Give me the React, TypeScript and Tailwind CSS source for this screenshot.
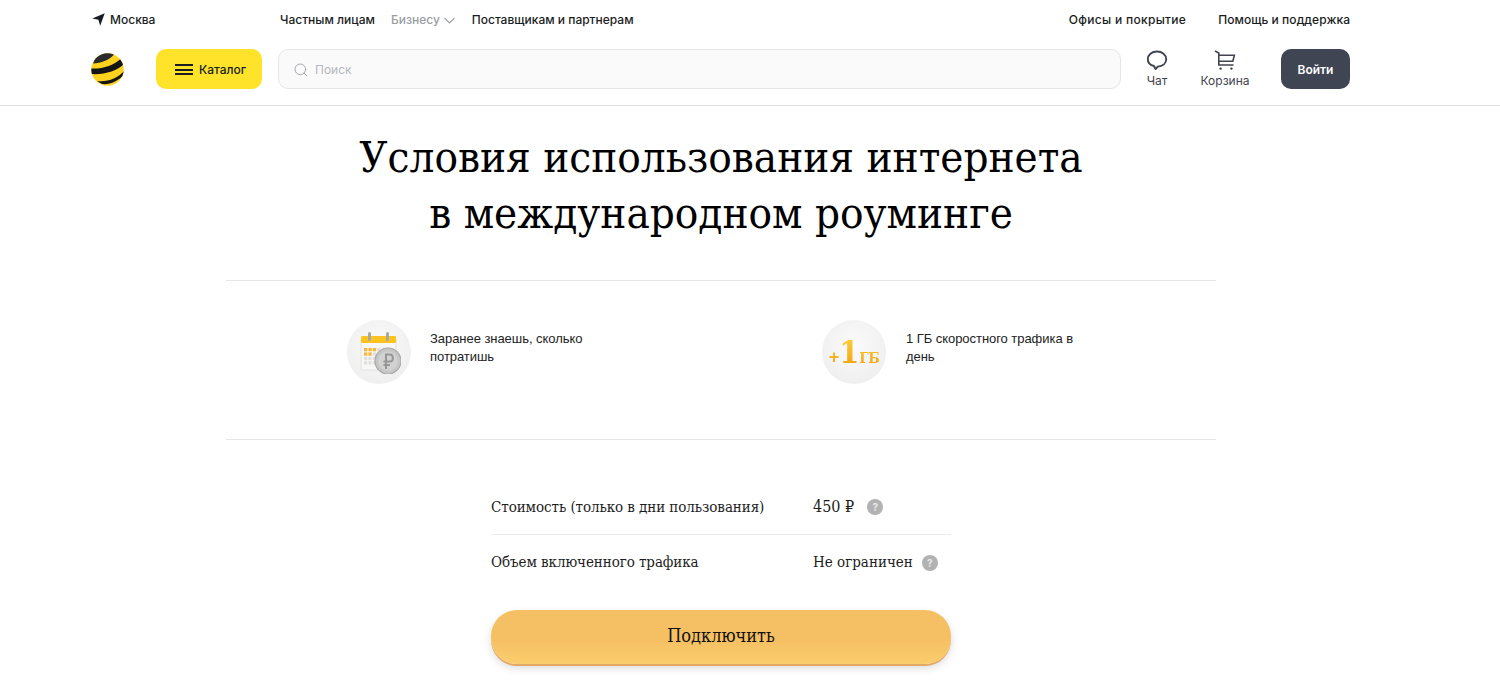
import { Search } from "lucide-react";

const sans = "font-['Inter','Noto_Sans',sans-serif]";
const slab = "font-['DejaVu_Serif_Condensed','DejaVu_Serif',serif]";

function Logo() {
  return (
    <svg width="33" height="33" viewBox="0 0 33 33" className="shrink-0">
      <defs>
        <clipPath id="ball">
          <circle cx="16.5" cy="16.5" r="16.2" />
        </clipPath>
      </defs>
      <circle cx="16.5" cy="16.5" r="16.2" fill="#fdd21f" />
      <g clipPath="url(#ball)">
        <path d="M2 10.500 C10 10 18 7.500 23.500 1 L16 -1 L5 3 Z" fill="#2b2b2b" />
        <path d="M0 21 C13 22 26 18 33 11 L30 5.500 C23 12.500 12 16 0 15.500Z" fill="#151515" />
        <path d="M6 28 C16 29.500 27 25 33 18 L33 21.500 C28 28 18 32 11 31Z" fill="#151515" />
      </g>
    </svg>
  );
}

function PlaneIcon() {
  return (
    <svg width="13" height="13" viewBox="0 0 13 13" className="shrink-0">
      <path d="M0.3 5.4 L12.7 0.3 L8.2 12.7 L6.4 6.8 Z" fill="#191c22" />
    </svg>
  );
}

function ChatIcon() {
  return (
    <svg width="22" height="21" viewBox="0 0 22 21" fill="none" stroke="#3f4450" strokeWidth="1.9">
      <path d="M11 1.5 C5.8 1.5 1.8 4.8 1.8 9.2 C1.8 12.8 4.6 15.2 8 16 L9.6 19 L11.8 16.6 C16.8 16.2 20.2 13.2 20.2 9.2 C20.2 4.8 16.2 1.5 11 1.5Z" strokeLinejoin="round" />
    </svg>
  );
}

function CartIcon() {
  return (
    <svg width="22" height="21" viewBox="0 0 22 21" fill="none" stroke="#3f4450" strokeWidth="1.6">
      <path d="M1 1 L4.8 3 L4.8 15 L19.5 15" />
      <path d="M4.8 5.2 L20.4 5.2 L18.8 11.2 L4.8 11.2" />
      <circle cx="6.6" cy="18.6" r="1.2" fill="#3f4450" stroke="none" />
      <circle cx="17.4" cy="18.6" r="1.2" fill="#3f4450" stroke="none" />
    </svg>
  );
}

function CalendarCoin() {
  return (
    <svg width="44" height="44" viewBox="0 0 44 44">
      <rect x="4" y="9" width="35" height="31" rx="1" fill="#f7f7f5" stroke="#e2e2e2" />
      <rect x="4" y="6" width="35" height="7" rx="1" fill="#fdc420" />
      <rect x="11" y="2" width="3" height="9" rx="1.5" fill="#a8a8a0" />
      <rect x="29" y="2" width="3" height="9" rx="1.5" fill="#a8a8a0" />
      {[0, 1, 2, 3].map((col) =>
        [0, 1, 2, 3].map((row) => (
          <rect
            key={`${col}-${row}`}
            x={7 + col * 4.4}
            y={18 + row * 4.4}
            width="3.3"
            height="3.3"
            fill={row === 0 && col < 3 ? "#f9b63a" : row === 1 && col < 2 ? "#f9b63a" : "#e0e0e0"}
          />
        ))
      )}
      <circle cx="31" cy="31" r="13" fill="#c6c6c6" stroke="#a8a8a8" strokeWidth="1.2" />
      <circle cx="31" cy="31" r="9.800" fill="#d2d2d2" />
      <path d="M29 39 L29 24.500 L33 24.500 C36.800 24.500 36.800 31.500 33 31.500 L26.500 31.500 M26.500 35 L33 35" fill="none" stroke="#969696" strokeWidth="2" />
    </svg>
  );
}

function HelpDot() {
  return (
    <span className={`${sans} flex h-4 w-4 items-center justify-center rounded-full bg-[#b2b2b2] text-[10px] font-bold leading-none text-[#e8e8e8]`}>
      ?
    </span>
  );
}

function TopBar() {
  return (
    <div className={`${sans} flex h-10 items-center text-[12px] font-medium text-[#191c22]`}>
      <div className="flex w-[188px] items-center gap-[5px] pb-px">
        <PlaneIcon />
        <span>Москва</span>
      </div>
      <div className="flex items-center">
        <span>Частным лицам</span>
        <span className="ml-4 flex items-center gap-1 text-[#9a9da3]">
          Бизнесу
          <svg width="11" height="7" viewBox="0 0 11 7" fill="none" stroke="#9a9da3" strokeWidth="1.2">
            <path d="M0.5 0.8 L5.5 5.8 L10.5 0.8" />
          </svg>
        </span>
        <span className="ml-[17px]">Поставщикам и партнерам</span>
      </div>
      <div className="ml-auto flex items-center gap-8">
        <span className="tracking-[0.3px]">Офисы и покрытие</span>
        <span className="tracking-[0.05px]">Помощь и поддержка</span>
      </div>
    </div>
  );
}

function MainBar() {
  return (
    <div className={`${sans} flex h-[65px] items-start`}>
      <div className="-ml-px mt-[13px] w-[65px]">
        <Logo />
      </div>
      <button className="mt-[9px] flex h-10 w-[106px] items-center gap-[6px] rounded-[10px] bg-[#ffe32b] pl-[19px] pt-px text-[12px] font-medium text-[#191c22]">
        <span className="flex w-[18px] flex-col gap-[2.5px]">
          <span className="h-[2px] bg-[#191c22]" />
          <span className="h-[2px] bg-[#191c22]" />
          <span className="h-[2px] bg-[#191c22]" />
        </span>
        Каталог
      </button>
      <div className="ml-4 mt-[9px] flex h-10 w-[843px] items-center gap-[6px] rounded-[10px] border border-[#e5e6e8] bg-[#fafafa] pl-[14px] pt-px text-[12px] text-[#b5b7bd]">
        <Search size={16} strokeWidth={1.5} className="text-[#a5a7ad]" />
        Поиск
      </div>
      <div className="ml-[24px] mt-[10px] flex w-[24px] flex-col items-center text-[12px] text-[#3f4450]">
        <ChatIcon />
        <span className="mt-[1px]">Чат</span>
      </div>
      <div className="ml-[31px] mt-[10px] flex w-[50px] flex-col items-center text-[12px] text-[#3f4450]">
        <CartIcon />
        <span className="mt-[1px]">Корзина</span>
      </div>
      <button className="ml-auto mt-[9px] h-10 w-[69px] rounded-[10px] bg-[#404553] pt-px text-[12px] font-semibold text-white">
        Войти
      </button>
    </div>
  );
}

function Feature({ icon, text, gap }: { icon: React.ReactNode; text: string; gap: string }) {
  return (
    <div className={`flex items-center ${gap}`}>
      <div className="flex h-[64px] w-[64px] shrink-0 items-center justify-center rounded-full bg-[radial-gradient(circle_at_50%_40%,#fbfbfb,#ebebeb)]">
        {icon}
      </div>
      <p className="w-[170px] -translate-y-[4px] font-['Liberation_Sans',sans-serif] text-[13px] leading-[18px] tracking-[-0.05px] text-[#222]">{text}</p>
    </div>
  );
}

function Row({ label, value, big }: { label: string; value: string; big?: boolean }) {
  return (
    <div className="flex items-center">
      <span className="w-[322px] text-[15px] tracking-[-0.08px]">{label}</span>
      <span className={big ? "text-[16px]" : "text-[15px]"}>{value}</span>
      <span className={big ? "ml-[13px]" : "ml-[9px]"}>
        <HelpDot />
      </span>
    </div>
  );
}

export default function App() {
  return (
    <div className="h-[688px] overflow-hidden bg-white">
      <header className="h-[106px] border-b border-[#dfe0e2]">
        <div className="ml-[92px] w-[1258px]">
          <TopBar />
          <MainBar />
        </div>
      </header>
      <div className="w-[1442px]">
        <main className={`${slab} mx-auto w-[990px] text-[#111]`}>
          <h1 className="mt-[23px] text-center text-[43.5px] leading-[56px] text-black">
            Условия использования интернета
            <br />
            в международном роуминге
          </h1>
          <div className="mt-[39px] flex h-[160px] items-start border-y border-[#e6e6e6] pt-[39px]">
            <div className="ml-[121px] w-[475px]">
              <Feature gap="gap-[19px]" icon={<CalendarCoin />} text="Заранее знаешь, сколько потратишь" />
            </div>
            <Feature
              gap="gap-5"
              icon={
                <span className="flex items-baseline bg-[linear-gradient(#ffd23c,#f0a010)] bg-clip-text font-bold leading-none text-transparent">
                  <span className="font-['Liberation_Sans',sans-serif] text-[18px]">+</span>
                  <span className="text-[32px] tracking-[-2px]">1</span>
                  <span className="ml-[2px] text-[15px] tracking-[-0.5px]">ГБ</span>
                </span>
              }
              text="1 ГБ скоростного трафика в день"
            />
          </div>
          <div className="ml-[265px] mt-[40px] w-[460px] text-[#1d1d1d]">
            <div className="flex h-[55px] items-center border-b border-[#ececec]">
              <Row label="Стоимость (только в дни пользования)" value="450 ₽" big />
            </div>
            <div className="flex h-[55px] items-center">
              <Row label="Объем включенного трафика" value="Не ограничен" />
            </div>
            <button className="mt-[20px] h-[54px] w-full rounded-[26px] bg-[linear-gradient(#f5c063_55%,#fbcd6d)] pb-1 text-[18px] text-[#111] shadow-[0_2px_0_#e3a968,0_4px_8px_rgba(0,0,0,0.15)]">
              Подключить
            </button>
          </div>
        </main>
      </div>
    </div>
  );
}
